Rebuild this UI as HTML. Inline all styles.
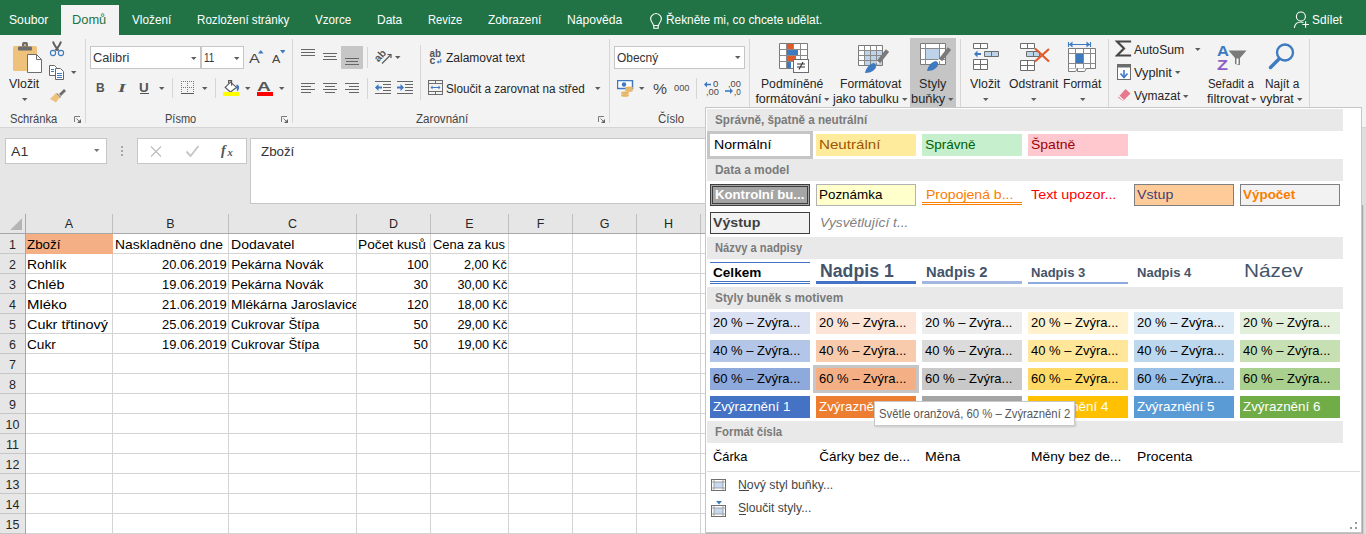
<!DOCTYPE html>
<html><head><meta charset="utf-8"><style>
html,body{margin:0;padding:0;}
body{width:1366px;height:534px;overflow:hidden;position:relative;background:#fff;font-family:"Liberation Sans",sans-serif;}
.r{position:absolute;}
.t{position:absolute;white-space:nowrap;line-height:1;font-family:"Liberation Sans",sans-serif;}
</style></head><body>
<div class="r" style="left:0px;top:0px;width:1366px;height:35px;background:#217346;"></div>
<div class="r" style="left:61px;top:5px;width:58px;height:30px;background:#f3f3f3;"></div>
<div class="t" style="left:9.38px;top:14.00px;font-size:12.5px;color:#ffffff;transform:scaleX(0.9738);transform-origin:0 0;">Soubor</div>
<div class="t" style="left:72.38px;top:14.00px;font-size:12.5px;color:#217346;transform:scaleX(1.0272);transform-origin:0 0;">Domů</div>
<div class="t" style="left:132.38px;top:14.00px;font-size:12.5px;color:#ffffff;transform:scaleX(0.9414);transform-origin:0 0;">Vložení</div>
<div class="t" style="left:197.38px;top:14.00px;font-size:12.5px;color:#ffffff;transform:scaleX(0.9286);transform-origin:0 0;">Rozložení stránky</div>
<div class="t" style="left:315.38px;top:14.00px;font-size:12.5px;color:#ffffff;transform:scaleX(0.9318);transform-origin:0 0;">Vzorce</div>
<div class="t" style="left:377.38px;top:14.00px;font-size:12.5px;color:#ffffff;transform:scaleX(0.9563);transform-origin:0 0;">Data</div>
<div class="t" style="left:428.38px;top:14.00px;font-size:12.5px;color:#ffffff;transform:scaleX(0.8964);transform-origin:0 0;">Revize</div>
<div class="t" style="left:488.38px;top:14.00px;font-size:12.5px;color:#ffffff;transform:scaleX(0.9462);transform-origin:0 0;">Zobrazení</div>
<div class="t" style="left:567.38px;top:14.00px;font-size:12.5px;color:#ffffff;transform:scaleX(0.9695);transform-origin:0 0;">Nápověda</div>
<div class="t" style="left:666.38px;top:14.00px;font-size:12.5px;color:#ffffff;transform:scaleX(0.9489);transform-origin:0 0;">Řekněte mi, co chcete udělat.</div>
<div class="t" style="left:1312.38px;top:14.00px;font-size:12.5px;color:#ffffff;transform:scaleX(0.9464);transform-origin:0 0;">Sdílet</div>
<svg class="r" style="left:648px;top:9px" width="16" height="20" viewBox="0 0 16 20"><path d="M5.5 16.5c-.3-1.5-1-2.5-2-4a5.2 5.2 0 1 1 9 0c-1 1.5-1.7 2.5-2 4z" fill="none" stroke="#fff" stroke-width="1.1"/><path d="M5.8 16.5h4.4v2.8H5.8z" fill="none" stroke="#fff" stroke-width="1.1"/><path d="M6.5 21.5h3" stroke="#fff" stroke-width="1.1"/></svg>
<svg class="r" style="left:1292px;top:11px" width="18" height="18" viewBox="0 0 18 18"><circle cx="8.9" cy="5.5" r="4.5" fill="none" stroke="#fff" stroke-width="1.1"/><path d="M2.3 16.8c.6-3.5 3-5.8 6.4-5.8 1 0 1.9.2 2.7.6" fill="none" stroke="#fff" stroke-width="1.1"/><path d="M13.6 10.2v6.6M10.3 13.5h6.6" stroke="#fff" stroke-width="1.1"/></svg>
<div class="r" style="left:0px;top:35px;width:1366px;height:92px;background:#f3f3f3;"></div>
<div class="r" style="left:0px;top:127px;width:1366px;height:1px;background:#d5d5d5;"></div>
<div class="r" style="left:85px;top:39px;width:1px;height:84px;background:#d6d6d6;"></div>
<div class="r" style="left:292px;top:39px;width:1px;height:84px;background:#d6d6d6;"></div>
<div class="r" style="left:609px;top:39px;width:1px;height:84px;background:#d6d6d6;"></div>
<div class="r" style="left:749px;top:39px;width:1px;height:84px;background:#d6d6d6;"></div>
<div class="r" style="left:960px;top:39px;width:1px;height:84px;background:#d6d6d6;"></div>
<div class="r" style="left:1108px;top:39px;width:1px;height:84px;background:#d6d6d6;"></div>
<div class="r" style="left:1309px;top:39px;width:1px;height:84px;background:#d6d6d6;"></div>
<div class="t" style="left:10.40px;top:113.00px;font-size:12px;color:#444;transform:scaleX(0.9311);transform-origin:0 0;">Schránka</div>
<div class="t" style="left:165.40px;top:113.00px;font-size:12px;color:#444;transform:scaleX(0.9174);transform-origin:0 0;">Písmo</div>
<div class="t" style="left:416.40px;top:113.00px;font-size:12px;color:#444;transform:scaleX(0.9661);transform-origin:0 0;">Zarovnání</div>
<div class="t" style="left:658.40px;top:113.00px;font-size:12px;color:#444;transform:scaleX(0.9583);transform-origin:0 0;">Číslo</div>
<svg class="r" style="left:74px;top:116px" width="8" height="8" viewBox="0 0 8 8"><path d="M.5 6V.5H6" fill="none" stroke="#7a7a7a"/><path d="M7 3v4H3z" fill="#666"/><path d="M2.5 2.5l2.5 2.5" stroke="#7a7a7a"/></svg>
<svg class="r" style="left:281px;top:116px" width="8" height="8" viewBox="0 0 8 8"><path d="M.5 6V.5H6" fill="none" stroke="#7a7a7a"/><path d="M7 3v4H3z" fill="#666"/><path d="M2.5 2.5l2.5 2.5" stroke="#7a7a7a"/></svg>
<svg class="r" style="left:598px;top:116px" width="8" height="8" viewBox="0 0 8 8"><path d="M.5 6V.5H6" fill="none" stroke="#7a7a7a"/><path d="M7 3v4H3z" fill="#666"/><path d="M2.5 2.5l2.5 2.5" stroke="#7a7a7a"/></svg>
<svg class="r" style="left:12px;top:42px" width="32" height="32" viewBox="0 0 32 32"><rect x="1" y="4" width="24" height="25" rx="1.5" fill="#eec27b"/><rect x="6" y="4.5" width="14" height="4" rx="1" fill="#6d6d6d"/><path d="M10 4.5v-2a3 3 0 0 1 6 0v2z" fill="#6d6d6d"/><circle cx="13" cy="3" r="1" fill="#eec27b"/><path d="M15.5 12.5h9l5 5v13h-14z" fill="#fff" stroke="#6d6d6d"/><path d="M24.5 12.5v5h5" fill="none" stroke="#6d6d6d"/></svg>
<div class="t" style="left:9.38px;top:78.00px;font-size:12.5px;color:#262626;transform:scaleX(0.9896);transform-origin:0 0;">Vložit</div>
<svg class="r" style="left:22.0px;top:98.0px" width="6" height="4" viewBox="0 0 6 4"><path d="M0 0h5.5L2.75 3z" fill="#5c5c5c"/></svg>
<svg class="r" style="left:48px;top:40px" width="18" height="17" viewBox="0 0 18 17"><path d="M5 1.5c1 3.5 3 6 5.5 9M13 1.5c-1 3.5-3 6-5.5 9" fill="none" stroke="#5f5f5f" stroke-width="2"/><circle cx="5" cy="13" r="2.6" fill="#f3f3f3" stroke="#3d7ac0" stroke-width="1.1"/><circle cx="13" cy="13" r="2.6" fill="#f3f3f3" stroke="#3d7ac0" stroke-width="1.1"/></svg>
<svg class="r" style="left:48px;top:64px" width="17" height="16" viewBox="0 0 17 16"><path d="M1.5 1.5h5l2 2v8h-7z" fill="#fff" stroke="#666"/><path d="M7.5 4.5h5l3 3v8h-8z" fill="#fff" stroke="#666"/><path d="M3 5.5h3M3 7.5h3M9 9.5h5M9 11.5h5M9 13.5h5" stroke="#3d7ac0"/></svg>
<svg class="r" style="left:70.5px;top:71.0px" width="6" height="4" viewBox="0 0 6 4"><path d="M0 0h5.5L2.75 3z" fill="#5c5c5c"/></svg>
<svg class="r" style="left:49px;top:86px" width="18" height="17" viewBox="0 0 18 17"><path d="M10 8l5-5 2 2-5 5z" fill="#6d6d6d"/><path d="M8 7l4 4-1 1-4-4z" fill="#6d6d6d"/><path d="M1 13l6-6 4 4-4 5.5z" fill="#eec27b"/></svg>
<div class="r" style="left:90px;top:46px;width:111px;height:23px;background:#fff;border:1px solid #c6c6c6;box-sizing:border-box;"></div>
<div class="r" style="left:201px;top:46px;width:43px;height:23px;background:#fff;border:1px solid #c6c6c6;box-sizing:border-box;"></div>
<div class="t" style="left:93.38px;top:52.00px;font-size:12.5px;color:#333;transform:scaleX(1.0233);transform-origin:0 0;">Calibri</div>
<div class="t" style="left:204.38px;top:52.00px;font-size:12.5px;color:#333;transform:scaleX(0.7899);transform-origin:0 0;">11</div>
<svg class="r" style="left:191.0px;top:56.5px" width="6" height="4" viewBox="0 0 6 4"><path d="M0 0h5.5L2.75 3z" fill="#5c5c5c"/></svg>
<svg class="r" style="left:234.0px;top:56.5px" width="6" height="4" viewBox="0 0 6 4"><path d="M0 0h5.5L2.75 3z" fill="#5c5c5c"/></svg>
<div class="t" style="left:249.35px;top:52.00px;font-size:13px;color:#444;transform:scaleX(1.2455);transform-origin:0 0;">A</div>
<svg class="r" style="left:258px;top:49.5px" width="5.5" height="4" viewBox="0 0 5.5 4"><path d="M0 3.5h5.5L2.75 0z" fill="#3d7ac0"/></svg>
<div class="t" style="left:272.48px;top:54.00px;font-size:10.5px;color:#444;transform:scaleX(1.1923);transform-origin:0 0;">A</div>
<svg class="r" style="left:279.8px;top:49.5px" width="5.5" height="4" viewBox="0 0 5.5 4"><path d="M0 0h5.5L2.75 3.5z" fill="#3d7ac0"/></svg>
<div class="t" style="left:95.90px;top:82.00px;font-size:12px;color:#555;font-weight:bold;">B</div>
<div class="t" style="left:118.35px;top:81.00px;font-size:13px;color:#555;font-weight:bold;font-style:italic;font-family:'Liberation Serif',serif;transform:scaleX(1.5418);transform-origin:0 0;">I</div>
<div class="t" style="left:139.40px;top:82.00px;font-size:12px;color:#555;font-weight:bold;transform:scaleX(1.1193);transform-origin:0 0;">U</div>
<div class="r" style="left:140px;top:93px;width:9px;height:1px;background:#555;"></div>
<svg class="r" style="left:159.0px;top:87.0px" width="6" height="4" viewBox="0 0 6 4"><path d="M0 0h5.5L2.75 3z" fill="#5c5c5c"/></svg>
<div class="r" style="left:172px;top:78px;width:1px;height:20px;background:#d6d6d6;"></div>
<svg class="r" style="left:181px;top:80px" width="14" height="15" viewBox="0 0 14 15"><rect x="0" y="1" width="1" height="1" fill="#7a7a7a"/><rect x="2" y="1" width="1" height="1" fill="#7a7a7a"/><rect x="4" y="1" width="1" height="1" fill="#7a7a7a"/><rect x="6" y="1" width="1" height="1" fill="#7a7a7a"/><rect x="8" y="1" width="1" height="1" fill="#7a7a7a"/><rect x="10" y="1" width="1" height="1" fill="#7a7a7a"/><rect x="12" y="1" width="1" height="1" fill="#7a7a7a"/><rect x="0" y="3" width="1" height="1" fill="#7a7a7a"/><rect x="6" y="3" width="1" height="1" fill="#7a7a7a"/><rect x="12" y="3" width="1" height="1" fill="#7a7a7a"/><rect x="0" y="5" width="1" height="1" fill="#7a7a7a"/><rect x="6" y="5" width="1" height="1" fill="#7a7a7a"/><rect x="12" y="5" width="1" height="1" fill="#7a7a7a"/><rect x="0" y="7" width="1" height="1" fill="#7a7a7a"/><rect x="2" y="7" width="1" height="1" fill="#7a7a7a"/><rect x="4" y="7" width="1" height="1" fill="#7a7a7a"/><rect x="6" y="7" width="1" height="1" fill="#7a7a7a"/><rect x="8" y="7" width="1" height="1" fill="#7a7a7a"/><rect x="10" y="7" width="1" height="1" fill="#7a7a7a"/><rect x="12" y="7" width="1" height="1" fill="#7a7a7a"/><rect x="0" y="9" width="1" height="1" fill="#7a7a7a"/><rect x="6" y="9" width="1" height="1" fill="#7a7a7a"/><rect x="12" y="9" width="1" height="1" fill="#7a7a7a"/><rect x="0" y="11" width="1" height="1" fill="#7a7a7a"/><rect x="6" y="11" width="1" height="1" fill="#7a7a7a"/><rect x="12" y="11" width="1" height="1" fill="#7a7a7a"/><rect x="0" y="13" width="13" height="1" fill="#5a5a5a"/></svg>
<svg class="r" style="left:202.0px;top:87.0px" width="6" height="4" viewBox="0 0 6 4"><path d="M0 0h5.5L2.75 3z" fill="#5c5c5c"/></svg>
<div class="r" style="left:215px;top:78px;width:1px;height:20px;background:#d6d6d6;"></div>
<svg class="r" style="left:222px;top:79px" width="18" height="17" viewBox="0 0 18 17"><path d="M3.2 8.4L8.5 3.2l6 5.2-6.1 4.6z" fill="#fff" stroke="#555" stroke-width="1.1"/><path d="M6.6 4.6V1.6h3v5.2" fill="none" stroke="#555" stroke-width="1.1"/><path d="M14.3 5.6c1.8.2 3 1.4 2.8 3.4-.2 1.6-1 2.8-2.1 3.4z" fill="#3d7ac0"/><rect x="1" y="13" width="16" height="4" fill="#ffff00"/></svg>
<svg class="r" style="left:245.0px;top:87.0px" width="6" height="4" viewBox="0 0 6 4"><path d="M0 0h5.5L2.75 3z" fill="#5c5c5c"/></svg>
<div class="t" style="left:257.35px;top:80.00px;font-size:13px;color:#555;font-weight:bold;transform:scaleX(1.4699);transform-origin:0 0;">A</div>
<div class="r" style="left:257px;top:92px;width:16px;height:4px;background:#ff0000;"></div>
<svg class="r" style="left:279.0px;top:87.0px" width="6" height="4" viewBox="0 0 6 4"><path d="M0 0h5.5L2.75 3z" fill="#5c5c5c"/></svg>
<div class="r" style="left:341px;top:46px;width:22px;height:23px;background:#c6c6c6;"></div>
<div class="r" style="left:301px;top:49px;width:14px;height:1px;background:#666666;"></div>
<div class="r" style="left:323px;top:53px;width:14px;height:1px;background:#666666;"></div>
<div class="r" style="left:345px;top:58px;width:14px;height:1px;background:#666666;"></div>
<div class="r" style="left:301px;top:52px;width:14px;height:1px;background:#666666;"></div>
<div class="r" style="left:324px;top:56px;width:12px;height:1px;background:#666666;"></div>
<div class="r" style="left:346px;top:61px;width:12px;height:1px;background:#666666;"></div>
<div class="r" style="left:301px;top:55px;width:14px;height:1px;background:#666666;"></div>
<div class="r" style="left:323px;top:59px;width:14px;height:1px;background:#666666;"></div>
<div class="r" style="left:345px;top:64px;width:14px;height:1px;background:#666666;"></div>
<div class="r" style="left:301px;top:83px;width:14px;height:1px;background:#666666;"></div>
<div class="r" style="left:323px;top:83px;width:14px;height:1px;background:#666666;"></div>
<div class="r" style="left:345px;top:83px;width:14px;height:1px;background:#666666;"></div>
<div class="r" style="left:301px;top:86px;width:10px;height:1px;background:#666666;"></div>
<div class="r" style="left:325px;top:86px;width:10px;height:1px;background:#666666;"></div>
<div class="r" style="left:349px;top:86px;width:10px;height:1px;background:#666666;"></div>
<div class="r" style="left:301px;top:89px;width:14px;height:1px;background:#666666;"></div>
<div class="r" style="left:323px;top:89px;width:14px;height:1px;background:#666666;"></div>
<div class="r" style="left:345px;top:89px;width:14px;height:1px;background:#666666;"></div>
<div class="r" style="left:301px;top:92px;width:10px;height:1px;background:#666666;"></div>
<div class="r" style="left:325px;top:92px;width:10px;height:1px;background:#666666;"></div>
<div class="r" style="left:349px;top:92px;width:10px;height:1px;background:#666666;"></div>
<div class="r" style="left:367px;top:47px;width:1px;height:21px;background:#d6d6d6;"></div>
<div class="r" style="left:367px;top:78px;width:1px;height:21px;background:#d6d6d6;"></div>
<svg class="r" style="left:372px;top:46px" width="24" height="20" viewBox="0 0 24 20"><text x="0" y="0" font-size="10.5" font-weight="bold" font-family="Liberation Sans" fill="#555" transform="translate(6.5 16.5) rotate(-48)">ab</text><path d="M10 17.5l8.5-8.5" stroke="#555" stroke-width="1.1"/><path d="M15.5 8.5h3.5v3.5" fill="none" stroke="#555" stroke-width="1.2"/></svg>
<svg class="r" style="left:395.0px;top:56.0px" width="6" height="4" viewBox="0 0 6 4"><path d="M0 0h5.5L2.75 3z" fill="#5c5c5c"/></svg>
<svg class="r" style="left:375px;top:81px" width="17" height="14" viewBox="0 0 17 14"><path d="M0 .5h16M8 3.5h8M8 6.5h8M8 9.5h8M0 12.5h16" stroke="#666"/><path d="M1 6.5h6" stroke="#3d7ac0" stroke-width="2"/><path d="M0 6.5l3.5-3.5v7z" fill="#3d7ac0"/></svg>
<svg class="r" style="left:397px;top:81px" width="17" height="14" viewBox="0 0 17 14"><path d="M0 .5h16M8 3.5h8M8 6.5h8M8 9.5h8M0 12.5h16" stroke="#666"/><path d="M0 6.5h5" stroke="#3d7ac0" stroke-width="2"/><path d="M7 6.5l-3.5-3.5v7z" fill="#3d7ac0"/></svg>
<div class="r" style="left:420px;top:45px;width:1px;height:55px;background:#d6d6d6;"></div>
<svg class="r" style="left:428px;top:48px" width="16" height="17" viewBox="0 0 16 17"><text x="1.5" y="8.8" font-size="10" font-weight="bold" font-family="Liberation Sans" fill="#555" textLength="11.5" lengthAdjust="spacingAndGlyphs">ab</text><text x="1.5" y="15.8" font-size="10.5" font-weight="bold" font-family="Liberation Sans" fill="#555">c</text><path d="M9.5 14h3.3V11" fill="none" stroke="#3d7ac0" stroke-width="1.1"/><path d="M8.8 14l2-1.8v3.6z" fill="#3d7ac0"/></svg>
<div class="t" style="left:446.38px;top:52.00px;font-size:12.5px;color:#262626;transform:scaleX(0.9606);transform-origin:0 0;">Zalamovat text</div>
<svg class="r" style="left:428px;top:80px" width="16" height="16" viewBox="0 0 16 16"><rect x=".5" y=".5" width="14" height="14" fill="none" stroke="#6d6d6d"/><path d="M.5 3.5h14M.5 11.5h14M7.5 .5v3M7.5 11.5v3" stroke="#6d6d6d"/><path d="M3 7.5h9" stroke="#3d7ac0"/><path d="M2.5 7.5l2-2v4zM12.5 7.5l-2-2v4z" fill="#3d7ac0"/></svg>
<div class="t" style="left:446.38px;top:83.00px;font-size:12.5px;color:#262626;transform:scaleX(0.9375);transform-origin:0 0;">Sloučit a zarovnat na střed</div>
<svg class="r" style="left:595.0px;top:87.0px" width="6" height="4" viewBox="0 0 6 4"><path d="M0 0h5.5L2.75 3z" fill="#5c5c5c"/></svg>
<div class="r" style="left:614px;top:46px;width:131px;height:23px;background:#fff;border:1px solid #c6c6c6;box-sizing:border-box;"></div>
<div class="t" style="left:617.38px;top:52.00px;font-size:12.5px;color:#333;transform:scaleX(0.9576);transform-origin:0 0;">Obecný</div>
<svg class="r" style="left:735.0px;top:56.0px" width="6" height="4" viewBox="0 0 6 4"><path d="M0 0h5.5L2.75 3z" fill="#5c5c5c"/></svg>
<svg class="r" style="left:617px;top:80px" width="17" height="17" viewBox="0 0 17 17"><rect x=".5" y=".5" width="15" height="8" fill="#fff" stroke="#3d7ac0" stroke-width="1.5"/><circle cx="7" cy="4.5" r="2.2" fill="#3d7ac0"/><ellipse cx="12" cy="8" rx="4" ry="1.4" fill="#e8b86a"/><ellipse cx="12" cy="10.5" rx="4" ry="1.4" fill="#e8b86a"/><ellipse cx="8" cy="13" rx="4" ry="1.4" fill="#e8b86a"/><ellipse cx="8" cy="15.5" rx="4" ry="1.4" fill="#e8b86a"/></svg>
<svg class="r" style="left:639.0px;top:87.0px" width="6" height="4" viewBox="0 0 6 4"><path d="M0 0h5.5L2.75 3z" fill="#5c5c5c"/></svg>
<div class="t" style="left:652.75px;top:81.00px;font-size:15px;color:#4a4a4a;transform:scaleX(1.0497);transform-origin:0 0;">%</div>
<div class="t" style="left:673.55px;top:84.00px;font-size:9px;color:#4a4a4a;transform:scaleX(1.0256);transform-origin:0 0;">000</div>
<div class="r" style="left:696px;top:78px;width:1px;height:21px;background:#d6d6d6;"></div>
<svg class="r" style="left:703px;top:80px" width="17" height="16" viewBox="0 0 17 16"><path d="M2 4.5h6" stroke="#3d7ac0" stroke-width="1.6"/><path d="M1 4.5l3-3v6z" fill="#3d7ac0"/></svg>
<div class="t" style="left:713.08px;top:80.00px;font-size:8.5px;color:#4a4a4a;transform:scaleX(1.1317);transform-origin:0 0;">0</div>
<div class="t" style="left:705.58px;top:88.00px;font-size:8.5px;color:#4a4a4a;transform:scaleX(1.0875);transform-origin:0 0;">,00</div>
<div class="t" style="left:727.58px;top:80.00px;font-size:8.5px;color:#4a4a4a;transform:scaleX(1.0875);transform-origin:0 0;">,00</div>
<div class="t" style="left:733.58px;top:88.00px;font-size:8.5px;color:#4a4a4a;transform:scaleX(0.9663);transform-origin:0 0;">,0</div>
<svg class="r" style="left:725px;top:87px" width="10" height="8" viewBox="0 0 10 8"><path d="M0 4h6" stroke="#3d7ac0" stroke-width="1.6"/><path d="M8 4l-3-3v6z" fill="#3d7ac0"/></svg>
<div class="r" style="left:910px;top:38px;width:46px;height:69px;background:#c5c5c5;"></div>
<div class="t" style="left:761.38px;top:78.00px;font-size:12.5px;color:#262626;transform:scaleX(0.9737);transform-origin:0 0;">Podmíněné</div>
<div class="t" style="left:755.38px;top:93.00px;font-size:12.5px;color:#262626;">formátování</div>
<svg class="r" style="left:824.0px;top:98.0px" width="6" height="4" viewBox="0 0 6 4"><path d="M0 0h5.5L2.75 3z" fill="#5c5c5c"/></svg>
<div class="t" style="left:840.38px;top:78.00px;font-size:12.5px;color:#262626;transform:scaleX(0.9689);transform-origin:0 0;">Formátovat</div>
<div class="t" style="left:833.38px;top:93.00px;font-size:12.5px;color:#262626;transform:scaleX(0.9856);transform-origin:0 0;">jako tabulku</div>
<svg class="r" style="left:902.0px;top:98.0px" width="6" height="4" viewBox="0 0 6 4"><path d="M0 0h5.5L2.75 3z" fill="#5c5c5c"/></svg>
<div class="t" style="left:919.38px;top:78.00px;font-size:12.5px;color:#262626;transform:scaleX(1.0060);transform-origin:0 0;">Styly</div>
<div class="t" style="left:911.38px;top:93.00px;font-size:12.5px;color:#262626;transform:scaleX(1.0268);transform-origin:0 0;">buňky</div>
<svg class="r" style="left:948.0px;top:98.0px" width="6" height="4" viewBox="0 0 6 4"><path d="M0 0h5.5L2.75 3z" fill="#5c5c5c"/></svg>
<div class="t" style="left:970.38px;top:78.00px;font-size:12.5px;color:#262626;transform:scaleX(0.9896);transform-origin:0 0;">Vložit</div>
<svg class="r" style="left:983.0px;top:98.0px" width="6" height="4" viewBox="0 0 6 4"><path d="M0 0h5.5L2.75 3z" fill="#5c5c5c"/></svg>
<div class="t" style="left:1009.38px;top:78.00px;font-size:12.5px;color:#262626;transform:scaleX(0.9711);transform-origin:0 0;">Odstranit</div>
<svg class="r" style="left:1031.0px;top:98.0px" width="6" height="4" viewBox="0 0 6 4"><path d="M0 0h5.5L2.75 3z" fill="#5c5c5c"/></svg>
<div class="t" style="left:1063.38px;top:78.00px;font-size:12.5px;color:#262626;transform:scaleX(0.9662);transform-origin:0 0;">Formát</div>
<svg class="r" style="left:1080.0px;top:98.0px" width="6" height="4" viewBox="0 0 6 4"><path d="M0 0h5.5L2.75 3z" fill="#5c5c5c"/></svg>
<svg class="r" style="left:778px;top:42px" width="33" height="32" viewBox="0 0 33 32"><path d="M1.5 1.5h28v25h-28z" fill="#fff" stroke="#7a7a7a"/><path d="M1.5 7.5h28M1.5 13.5h28M1.5 19.5h28M8.5 1.5v25M15.5 1.5v25M22.5 1.5v25" stroke="#8a8a8a"/><rect x="9" y="2" width="6" height="5" fill="#e05a2b"/><rect x="9" y="8" width="11" height="5" fill="#3d7ac0"/><rect x="9" y="14" width="9" height="5" fill="#e05a2b"/><rect x="9" y="20" width="4" height="6" fill="#3d7ac0"/><rect x="15.5" y="17.5" width="15" height="13" fill="#fff" stroke="#6d6d6d"/><path d="M19 22h8M19 25h8M25 20l-4 7.5" stroke="#333" stroke-width="1.1"/></svg>
<svg class="r" style="left:857px;top:44px" width="32" height="30" viewBox="0 0 32 30"><path d="M1.5 1.5h24v20h-24z" fill="#fff" stroke="#7a7a7a"/><rect x="7" y="6" width="18" height="15" fill="#bdd3ea"/><path d="M1.5 6.5h24M1.5 11.5h24M1.5 16.5h24M7.5 1.5v20M13.5 1.5v20M19.5 1.5v20" stroke="#8a8a8a"/><path d="M30.5 6.5l-9 11.5" stroke="#7a7a7a" stroke-width="4.2"/><path d="M19.5 17.5l2.5 2" stroke="#fff" stroke-width="1.6"/><path d="M8 29c1-5 4-9 9-10 2 1 3 3 1 6-3 3-6 4-10 4z" fill="#3d7ac0"/></svg>
<svg class="r" style="left:919px;top:42px" width="32" height="30" viewBox="0 0 32 30"><path d="M1.5 1.5h25v21h-25z" fill="#fff" stroke="#7a7a7a"/><path d="M1.5 6.5h25M1.5 17.5h25M6.5 1.5v21M20.5 1.5v21" stroke="#8a8a8a"/><rect x="7" y="7" width="13" height="10" fill="#bdd3ea"/><path d="M30.5 6.5l-9 11.5" stroke="#7a7a7a" stroke-width="4.2"/><path d="M19.5 17.5l2.5 2" stroke="#fff" stroke-width="1.6"/><path d="M8 29c1-5 4-9 9-10 2 1 3 3 1 6-3 3-6 4-10 4z" fill="#3d7ac0"/></svg>
<svg class="r" style="left:972px;top:42px" width="30" height="30" viewBox="0 0 30 30"><path d="M1.5 1.5h14v5h-14zM8.5 1.5v5" fill="#fff" stroke="#6d6d6d"/><path d="M12.5 9.5h14v5h-14zM19.5 9.5v5" fill="#bdd3ea" stroke="#6d6d6d"/><path d="M4 12h5" stroke="#3d7ac0" stroke-width="2"/><path d="M2 12l3.5-3.5v7z" fill="#3d7ac0"/><path d="M1.5 17.5h14v10h-14zM1.5 22.5h14M8.5 17.5v10" fill="#fff" stroke="#6d6d6d"/></svg>
<svg class="r" style="left:1019px;top:42px" width="32" height="30" viewBox="0 0 32 30"><path d="M1.5 1.5h14v5h-14zM8.5 1.5v5" fill="#fff" stroke="#6d6d6d"/><path d="M7.5 9.5h13v5h-13zM14.5 9.5v5" fill="#bdd3ea" stroke="#6d6d6d"/><path d="M1.5 18.5h14v10h-14zM1.5 23.5h14M8.5 18.5v10" fill="#fff" stroke="#6d6d6d"/><path d="M16 6.5l14 13M30 7l-14 12.5" stroke="#e05a2b" stroke-width="2.2"/></svg>
<svg class="r" style="left:1067px;top:40px" width="30" height="34" viewBox="0 0 30 34"><path d="M1.5 2v5M23.5 2v5M2 4.5h21" stroke="#3d7ac0" stroke-width="1.1"/><path d="M2 4.5l3.5-3v6zM23 4.5l-3.5-3v6z" fill="#3d7ac0"/><path d="M1.5 8.5h27v20h-27z" fill="#fff" stroke="#7a7a7a"/><path d="M1.5 13.5h27M1.5 23.5h27M8.5 8.5v20M16.5 8.5v20M23.5 8.5v20" stroke="#8a8a8a"/><rect x="9" y="14" width="7" height="9" fill="#3d7ac0"/><path d="M1.5 28.5v3h7l2-3M10.5 28.5v3h7l2-3" fill="#fff" stroke="#7a7a7a"/></svg>
<svg class="r" style="left:1115px;top:40px" width="17" height="17" viewBox="0 0 17 17"><path d="M15 2.5V1.5H2l7 7-7 7h13v-1" fill="none" stroke="#474747" stroke-width="2.2"/></svg>
<div class="t" style="left:1134.38px;top:44.00px;font-size:12.5px;color:#262626;transform:scaleX(0.9773);transform-origin:0 0;">AutoSum</div>
<svg class="r" style="left:1195.0px;top:48.0px" width="6" height="4" viewBox="0 0 6 4"><path d="M0 0h5.5L2.75 3z" fill="#5c5c5c"/></svg>
<svg class="r" style="left:1117px;top:64px" width="14" height="16" viewBox="0 0 14 16"><rect x=".5" y=".5" width="13" height="15" fill="#fff" stroke="#6d6d6d"/><rect x="0" y="0" width="14" height="3.5" fill="#6d6d6d"/><path d="M7 6v7" stroke="#3d7ac0" stroke-width="1.6"/><path d="M3.5 9.5l3.5 4 3.5-4" fill="none" stroke="#3d7ac0" stroke-width="1.6"/></svg>
<div class="t" style="left:1134.38px;top:67.00px;font-size:12.5px;color:#262626;transform:scaleX(1.0188);transform-origin:0 0;">Vyplnit</div>
<svg class="r" style="left:1175.0px;top:71.0px" width="6" height="4" viewBox="0 0 6 4"><path d="M0 0h5.5L2.75 3z" fill="#5c5c5c"/></svg>
<svg class="r" style="left:1117px;top:88px" width="14" height="13" viewBox="0 0 14 13"><path d="M1 9.5l7.5-8.5 5 4.5-7.5 7.5z" fill="#e8788c"/><path d="M2.2 8.2l4.2 4" stroke="#fff" stroke-width="1.2"/></svg>
<div class="t" style="left:1134.38px;top:90.00px;font-size:12.5px;color:#262626;transform:scaleX(0.9603);transform-origin:0 0;">Vymazat</div>
<svg class="r" style="left:1183.0px;top:95.0px" width="6" height="4" viewBox="0 0 6 4"><path d="M0 0h5.5L2.75 3z" fill="#5c5c5c"/></svg>
<div class="t" style="left:1216.78px;top:44.00px;font-size:14.5px;color:#3d7ac0;font-weight:bold;transform:scaleX(1.1412);transform-origin:0 0;">A</div>
<div class="t" style="left:1217.28px;top:58.00px;font-size:14.5px;color:#8e5ec2;font-weight:bold;transform:scaleX(1.2363);transform-origin:0 0;">Z</div>
<svg class="r" style="left:1228px;top:50px" width="19" height="16" viewBox="0 0 19 16"><path d="M.5 .5h18l-6.5 7.5v7l-5-1v-6z" fill="#7a7a7a"/><path d="M8.5 8.5v5.5h2v-5.5" fill="#fff"/></svg>
<div class="t" style="left:1208.38px;top:78.00px;font-size:12.5px;color:#262626;transform:scaleX(0.9144);transform-origin:0 0;">Seřadit a</div>
<div class="t" style="left:1206.88px;top:93.00px;font-size:12.5px;color:#262626;transform:scaleX(1.0363);transform-origin:0 0;">filtrovat</div>
<svg class="r" style="left:1251.0px;top:98.0px" width="6" height="4" viewBox="0 0 6 4"><path d="M0 0h5.5L2.75 3z" fill="#5c5c5c"/></svg>
<svg class="r" style="left:1267px;top:42px" width="29" height="29" viewBox="0 0 29 29"><circle cx="18" cy="10.5" r="8" fill="none" stroke="#3d7ac0" stroke-width="2.3"/><path d="M12 17L3.5 25.5" stroke="#3d7ac0" stroke-width="3.4" stroke-linecap="round"/></svg>
<div class="t" style="left:1264.88px;top:78.00px;font-size:12.5px;color:#262626;transform:scaleX(0.9481);transform-origin:0 0;">Najít a</div>
<div class="t" style="left:1260.38px;top:93.00px;font-size:12.5px;color:#262626;transform:scaleX(0.9915);transform-origin:0 0;">vybrat</div>
<svg class="r" style="left:1297.0px;top:98.0px" width="6" height="4" viewBox="0 0 6 4"><path d="M0 0h5.5L2.75 3z" fill="#5c5c5c"/></svg>
<div class="r" style="left:0px;top:128px;width:1366px;height:86px;background:#e6e6e6;"></div>
<div class="r" style="left:5px;top:138px;width:102px;height:26px;background:#fff;border:1px solid #c6c6c6;box-sizing:border-box;"></div>
<div class="t" style="left:11.38px;top:146.00px;font-size:12.5px;color:#333;transform:scaleX(1.1282);transform-origin:0 0;">A1</div>
<svg class="r" style="left:94.0px;top:149.0px" width="6" height="4" viewBox="0 0 6 4"><path d="M0 0h5.5L2.75 3z" fill="#777"/></svg>
<div class="r" style="left:121px;top:146px;width:2px;height:2px;background:#a8a8a8;"></div>
<div class="r" style="left:121px;top:150px;width:2px;height:2px;background:#a8a8a8;"></div>
<div class="r" style="left:121px;top:154px;width:2px;height:2px;background:#a8a8a8;"></div>
<div class="r" style="left:137px;top:138px;width:110px;height:26px;background:#fff;border:1px solid #c6c6c6;box-sizing:border-box;"></div>
<svg class="r" style="left:150px;top:146px" width="12" height="11" viewBox="0 0 12 11"><path d="M1 .5l10 10M11 .5L1 10.5" stroke="#bdbdbd" stroke-width="1.2"/></svg>
<svg class="r" style="left:185px;top:145px" width="15" height="12" viewBox="0 0 15 12"><path d="M1.5 6.5l4 4.5 8-10" fill="none" stroke="#c8c8c8" stroke-width="2"/></svg>
<div class="t" style="left:221px;top:144px;font-size:14px;font-family:'Liberation Serif',serif;font-style:italic;font-weight:bold;color:#555;line-height:1">f</div>
<div class="t" style="left:227.5px;top:147.5px;font-size:10.5px;font-family:'Liberation Serif',serif;font-style:italic;font-weight:bold;color:#555;line-height:1">x</div>
<div class="r" style="left:250px;top:138px;width:1100px;height:66px;background:#fff;border:1px solid #c6c6c6;box-sizing:border-box;"></div>
<div class="t" style="left:261.35px;top:145.00px;font-size:13px;color:#333;transform:scaleX(1.0242);transform-origin:0 0;">Zboží</div>
<div class="r" style="left:0px;top:214px;width:1366px;height:320px;background:#fff;"></div>
<div class="r" style="left:0px;top:214px;width:1366px;height:19px;background:#e6e6e6;"></div>
<div class="r" style="left:0px;top:233px;width:25px;height:301px;background:#e6e6e6;"></div>
<svg class="r" style="left:10px;top:218px" width="13" height="13" viewBox="0 0 13 13"><path d="M12 .2v11.8H.2z" fill="#b4b4b4"/></svg>
<div class="r" style="left:25px;top:234px;width:1px;height:300px;background:#d4d4d4;"></div>
<div class="r" style="left:112px;top:234px;width:1px;height:300px;background:#d4d4d4;"></div>
<div class="r" style="left:228px;top:234px;width:1px;height:300px;background:#d4d4d4;"></div>
<div class="r" style="left:356px;top:234px;width:1px;height:300px;background:#d4d4d4;"></div>
<div class="r" style="left:430px;top:234px;width:1px;height:300px;background:#d4d4d4;"></div>
<div class="r" style="left:508px;top:234px;width:1px;height:300px;background:#d4d4d4;"></div>
<div class="r" style="left:572px;top:234px;width:1px;height:300px;background:#d4d4d4;"></div>
<div class="r" style="left:636px;top:234px;width:1px;height:300px;background:#d4d4d4;"></div>
<div class="r" style="left:700px;top:234px;width:1px;height:300px;background:#d4d4d4;"></div>
<div class="r" style="left:112px;top:214px;width:1px;height:19px;background:#bfbfbf;"></div>
<div class="r" style="left:228px;top:214px;width:1px;height:19px;background:#bfbfbf;"></div>
<div class="r" style="left:356px;top:214px;width:1px;height:19px;background:#bfbfbf;"></div>
<div class="r" style="left:430px;top:214px;width:1px;height:19px;background:#bfbfbf;"></div>
<div class="r" style="left:508px;top:214px;width:1px;height:19px;background:#bfbfbf;"></div>
<div class="r" style="left:572px;top:214px;width:1px;height:19px;background:#bfbfbf;"></div>
<div class="r" style="left:636px;top:214px;width:1px;height:19px;background:#bfbfbf;"></div>
<div class="r" style="left:700px;top:214px;width:1px;height:19px;background:#bfbfbf;"></div>
<div class="r" style="left:765px;top:214px;width:1px;height:19px;background:#bfbfbf;"></div>
<div class="t" style="left:64.83px;top:218.00px;font-size:12.5px;color:#262626;">A</div>
<div class="t" style="left:166.33px;top:218.00px;font-size:12.5px;color:#262626;">B</div>
<div class="t" style="left:287.99px;top:218.00px;font-size:12.5px;color:#262626;">C</div>
<div class="t" style="left:388.99px;top:218.00px;font-size:12.5px;color:#262626;">D</div>
<div class="t" style="left:465.33px;top:218.00px;font-size:12.5px;color:#262626;">E</div>
<div class="t" style="left:536.68px;top:218.00px;font-size:12.5px;color:#262626;">F</div>
<div class="t" style="left:599.64px;top:218.00px;font-size:12.5px;color:#262626;">G</div>
<div class="t" style="left:663.99px;top:218.00px;font-size:12.5px;color:#262626;">H</div>
<div class="r" style="left:0px;top:233px;width:1366px;height:1px;background:#a8a8a8;"></div>
<div class="r" style="left:25px;top:214px;width:1px;height:320px;background:#a8a8a8;"></div>
<div class="r" style="left:26px;top:253px;width:1340px;height:1px;background:#d4d4d4;"></div>
<div class="r" style="left:0px;top:253px;width:25px;height:1px;background:#c6c6c6;"></div>
<div class="t" style="left:9.02px;top:239.00px;font-size:12.5px;color:#262626;">1</div>
<div class="r" style="left:26px;top:273px;width:1340px;height:1px;background:#d4d4d4;"></div>
<div class="r" style="left:0px;top:273px;width:25px;height:1px;background:#c6c6c6;"></div>
<div class="t" style="left:9.02px;top:259.00px;font-size:12.5px;color:#262626;">2</div>
<div class="r" style="left:26px;top:293px;width:1340px;height:1px;background:#d4d4d4;"></div>
<div class="r" style="left:0px;top:293px;width:25px;height:1px;background:#c6c6c6;"></div>
<div class="t" style="left:9.02px;top:279.00px;font-size:12.5px;color:#262626;">3</div>
<div class="r" style="left:26px;top:313px;width:1340px;height:1px;background:#d4d4d4;"></div>
<div class="r" style="left:0px;top:313px;width:25px;height:1px;background:#c6c6c6;"></div>
<div class="t" style="left:9.02px;top:299.00px;font-size:12.5px;color:#262626;">4</div>
<div class="r" style="left:26px;top:333px;width:1340px;height:1px;background:#d4d4d4;"></div>
<div class="r" style="left:0px;top:333px;width:25px;height:1px;background:#c6c6c6;"></div>
<div class="t" style="left:9.02px;top:319.00px;font-size:12.5px;color:#262626;">5</div>
<div class="r" style="left:26px;top:353px;width:1340px;height:1px;background:#d4d4d4;"></div>
<div class="r" style="left:0px;top:353px;width:25px;height:1px;background:#c6c6c6;"></div>
<div class="t" style="left:9.02px;top:339.00px;font-size:12.5px;color:#262626;">6</div>
<div class="r" style="left:26px;top:373px;width:1340px;height:1px;background:#d4d4d4;"></div>
<div class="r" style="left:0px;top:373px;width:25px;height:1px;background:#c6c6c6;"></div>
<div class="t" style="left:9.02px;top:359.00px;font-size:12.5px;color:#262626;">7</div>
<div class="r" style="left:26px;top:393px;width:1340px;height:1px;background:#d4d4d4;"></div>
<div class="r" style="left:0px;top:393px;width:25px;height:1px;background:#c6c6c6;"></div>
<div class="t" style="left:9.02px;top:379.00px;font-size:12.5px;color:#262626;">8</div>
<div class="r" style="left:26px;top:413px;width:1340px;height:1px;background:#d4d4d4;"></div>
<div class="r" style="left:0px;top:413px;width:25px;height:1px;background:#c6c6c6;"></div>
<div class="t" style="left:9.02px;top:399.00px;font-size:12.5px;color:#262626;">9</div>
<div class="r" style="left:26px;top:433px;width:1340px;height:1px;background:#d4d4d4;"></div>
<div class="r" style="left:0px;top:433px;width:25px;height:1px;background:#c6c6c6;"></div>
<div class="t" style="left:5.55px;top:419.00px;font-size:12.5px;color:#262626;">10</div>
<div class="r" style="left:26px;top:453px;width:1340px;height:1px;background:#d4d4d4;"></div>
<div class="r" style="left:0px;top:453px;width:25px;height:1px;background:#c6c6c6;"></div>
<div class="t" style="left:6.01px;top:439.00px;font-size:12.5px;color:#262626;">11</div>
<div class="r" style="left:26px;top:473px;width:1340px;height:1px;background:#d4d4d4;"></div>
<div class="r" style="left:0px;top:473px;width:25px;height:1px;background:#c6c6c6;"></div>
<div class="t" style="left:5.55px;top:459.00px;font-size:12.5px;color:#262626;">12</div>
<div class="r" style="left:26px;top:493px;width:1340px;height:1px;background:#d4d4d4;"></div>
<div class="r" style="left:0px;top:493px;width:25px;height:1px;background:#c6c6c6;"></div>
<div class="t" style="left:5.55px;top:479.00px;font-size:12.5px;color:#262626;">13</div>
<div class="r" style="left:26px;top:513px;width:1340px;height:1px;background:#d4d4d4;"></div>
<div class="r" style="left:0px;top:513px;width:25px;height:1px;background:#c6c6c6;"></div>
<div class="t" style="left:5.55px;top:499.00px;font-size:12.5px;color:#262626;">14</div>
<div class="r" style="left:26px;top:533px;width:1340px;height:1px;background:#d4d4d4;"></div>
<div class="r" style="left:0px;top:533px;width:25px;height:1px;background:#c6c6c6;"></div>
<div class="t" style="left:5.55px;top:519.00px;font-size:12.5px;color:#262626;">15</div>
<div class="r" style="left:26px;top:234px;width:87px;height:20px;background:#f4b084;"></div>
<div class="t" style="left:27.32px;top:238.00px;font-size:13.5px;color:#000;transform:scaleX(0.9878);transform-origin:0 0;">Zboží</div>
<div class="t" style="left:115.33px;top:238.00px;font-size:13.5px;color:#000;transform:scaleX(1.0264);transform-origin:0 0;">Naskladněno dne</div>
<div class="t" style="left:231.32px;top:238.00px;font-size:13.5px;color:#000;transform:scaleX(1.0421);transform-origin:0 0;">Dodavatel</div>
<div class="t" style="left:358.32px;top:238.00px;font-size:13.5px;color:#000;transform:scaleX(1.0159);transform-origin:0 0;">Počet kusů</div>
<div class="t" style="left:432.82px;top:238.00px;font-size:13.5px;color:#000;transform:scaleX(0.9575);transform-origin:0 0;">Cena za kus</div>
<div class="t" style="left:27.32px;top:258.00px;font-size:13.5px;color:#000;transform:scaleX(1.0283);transform-origin:0 0;">Rohlík</div>
<div class="t" style="left:158.61px;top:258.00px;font-size:13.5px;color:#000;transform:scaleX(0.955);transform-origin:100% 0;">20.06.2019</div>
<div class="t" style="left:231.32px;top:258.00px;font-size:13.5px;color:#000;">Pekárna Novák</div>
<div class="t" style="left:405.65px;top:258.00px;font-size:13.5px;color:#000;transform:scaleX(0.96);transform-origin:100% 0;">100</div>
<div class="t" style="left:461.39px;top:258.00px;font-size:13.5px;color:#000;transform:scaleX(0.935);transform-origin:100% 0;">2,00 Kč</div>
<div class="t" style="left:27.32px;top:278.00px;font-size:13.5px;color:#000;transform:scaleX(1.0589);transform-origin:0 0;">Chléb</div>
<div class="t" style="left:158.61px;top:278.00px;font-size:13.5px;color:#000;transform:scaleX(0.955);transform-origin:100% 0;">19.06.2019</div>
<div class="t" style="left:231.32px;top:278.00px;font-size:13.5px;color:#000;">Pekárna Novák</div>
<div class="t" style="left:413.16px;top:278.00px;font-size:13.5px;color:#000;transform:scaleX(0.96);transform-origin:100% 0;">30</div>
<div class="t" style="left:453.89px;top:278.00px;font-size:13.5px;color:#000;transform:scaleX(0.935);transform-origin:100% 0;">30,00 Kč</div>
<div class="t" style="left:27.32px;top:298.00px;font-size:13.5px;color:#000;transform:scaleX(1.1066);transform-origin:0 0;">Mléko</div>
<div class="t" style="left:158.61px;top:298.00px;font-size:13.5px;color:#000;transform:scaleX(0.955);transform-origin:100% 0;">21.06.2019</div>
<div class="t" style="left:231.32px;top:298.00px;font-size:13.5px;color:#000;transform:scaleX(1.0122);transform-origin:0 0;">Mlékárna Jaroslavice</div>
<div class="t" style="left:405.65px;top:298.00px;font-size:13.5px;color:#000;transform:scaleX(0.96);transform-origin:100% 0;">120</div>
<div class="t" style="left:453.89px;top:298.00px;font-size:13.5px;color:#000;transform:scaleX(0.935);transform-origin:100% 0;">18,00 Kč</div>
<div class="t" style="left:27.32px;top:318.00px;font-size:13.5px;color:#000;transform:scaleX(1.0671);transform-origin:0 0;">Cukr třtinový</div>
<div class="t" style="left:158.61px;top:318.00px;font-size:13.5px;color:#000;transform:scaleX(0.955);transform-origin:100% 0;">25.06.2019</div>
<div class="t" style="left:231.32px;top:318.00px;font-size:13.5px;color:#000;transform:scaleX(0.9813);transform-origin:0 0;">Cukrovar Štípa</div>
<div class="t" style="left:413.16px;top:318.00px;font-size:13.5px;color:#000;transform:scaleX(0.96);transform-origin:100% 0;">50</div>
<div class="t" style="left:453.89px;top:318.00px;font-size:13.5px;color:#000;transform:scaleX(0.935);transform-origin:100% 0;">29,00 Kč</div>
<div class="t" style="left:27.32px;top:338.00px;font-size:13.5px;color:#000;transform:scaleX(1.0122);transform-origin:0 0;">Cukr</div>
<div class="t" style="left:158.61px;top:338.00px;font-size:13.5px;color:#000;transform:scaleX(0.955);transform-origin:100% 0;">19.06.2019</div>
<div class="t" style="left:231.32px;top:338.00px;font-size:13.5px;color:#000;transform:scaleX(0.9813);transform-origin:0 0;">Cukrovar Štípa</div>
<div class="t" style="left:413.16px;top:338.00px;font-size:13.5px;color:#000;transform:scaleX(0.96);transform-origin:100% 0;">50</div>
<div class="t" style="left:453.89px;top:338.00px;font-size:13.5px;color:#000;transform:scaleX(0.935);transform-origin:100% 0;">19,00 Kč</div>
<div class="r" style="left:357px;top:294px;width:5px;height:19px;background:#fff;"></div>
<div class="r" style="left:356px;top:293px;width:1px;height:20px;background:#d4d4d4;"></div>
<div class="r" style="left:1362px;top:128px;width:4px;height:406px;background:#dedede;"></div>
<div class="r" style="left:705px;top:107px;width:657px;height:426px;background:#fff;border:1px solid #c6c6c6;box-sizing:border-box;"></div>
<div class="r" style="left:1362px;top:205px;width:1px;height:329px;background:#a9a9a9;"></div>
<div class="r" style="left:1363px;top:205px;width:1px;height:329px;background:#cfcfcf;"></div>
<div class="r" style="left:706px;top:533px;width:657px;height:1px;background:#b9b9b9;"></div>
<div class="r" style="left:707px;top:109px;width:636px;height:22px;background:#e9e9e9;"></div>
<div class="t" style="left:715.40px;top:114.00px;font-size:12px;color:#7a7a7a;font-weight:bold;transform:scaleX(0.9712);transform-origin:0 0;">Správně, špatně a neutrální</div>
<div class="r" style="left:707px;top:131px;width:106px;height:28px;background:#c6c6c6;"></div>
<div class="r" style="left:710px;top:134px;width:100px;height:22px;background:#fff;"></div>
<div class="t" style="left:714.33px;top:138.00px;font-size:13.5px;color:#000;transform:scaleX(1.0472);transform-origin:0 0;">Normální</div>
<div class="r" style="left:816px;top:134px;width:100px;height:22px;background:#ffeb9c;"></div>
<div class="t" style="left:819.33px;top:138.00px;font-size:13.5px;color:#9c5700;transform:scaleX(1.1200);transform-origin:0 0;">Neutrální</div>
<div class="r" style="left:922px;top:134px;width:100px;height:22px;background:#c6efce;"></div>
<div class="t" style="left:925.33px;top:138.00px;font-size:13.5px;color:#006100;">Správně</div>
<div class="r" style="left:1028px;top:134px;width:100px;height:22px;background:#ffc7ce;"></div>
<div class="t" style="left:1031.33px;top:138.00px;font-size:13.5px;color:#9c0006;transform:scaleX(1.0365);transform-origin:0 0;">Špatně</div>
<div class="r" style="left:707px;top:159px;width:636px;height:22px;background:#e9e9e9;"></div>
<div class="t" style="left:715.40px;top:164.00px;font-size:12px;color:#7a7a7a;font-weight:bold;transform:scaleX(0.9934);transform-origin:0 0;">Data a model</div>
<div class="r" style="left:710px;top:184px;width:100px;height:22px;background:#a5a5a5;border:3px double #3f3f3f;box-sizing:border-box;"></div>
<div class="t" style="left:715.35px;top:188.00px;font-size:13px;color:#fff;font-weight:bold;transform:scaleX(1.0137);transform-origin:0 0;">Kontrolní bu...</div>
<div class="r" style="left:816px;top:184px;width:100px;height:22px;background:#ffffcc;border:1px solid #b2b2b2;box-sizing:border-box;"></div>
<div class="t" style="left:819.33px;top:188.00px;font-size:13.5px;color:#000;transform:scaleX(0.9932);transform-origin:0 0;">Poznámka</div>
<div class="r" style="left:922px;top:184px;width:100px;height:22px;background:#fff;"></div>
<div class="t" style="left:926.33px;top:188.00px;font-size:13.5px;color:#fa7d00;transform:scaleX(1.0392);transform-origin:0 0;">Propojená b...</div>
<div class="r" style="left:922px;top:202px;width:100px;height:1px;background:#ff8001;"></div>
<div class="r" style="left:922px;top:204px;width:100px;height:1px;background:#ff8001;"></div>
<div class="t" style="left:1031.33px;top:188.00px;font-size:13.5px;color:#ff0000;transform:scaleX(1.0630);transform-origin:0 0;">Text upozor...</div>
<div class="r" style="left:1134px;top:184px;width:100px;height:22px;background:#ffcc99;border:1px solid #7f7f7f;box-sizing:border-box;"></div>
<div class="t" style="left:1137.33px;top:188.00px;font-size:13.5px;color:#3f3f76;transform:scaleX(1.0530);transform-origin:0 0;">Vstup</div>
<div class="r" style="left:1240px;top:184px;width:100px;height:22px;background:#f2f2f2;border:1px solid #7f7f7f;box-sizing:border-box;"></div>
<div class="t" style="left:1243.35px;top:188.00px;font-size:13px;color:#fa7d00;font-weight:bold;transform:scaleX(1.0342);transform-origin:0 0;">Výpočet</div>
<div class="r" style="left:710px;top:212px;width:100px;height:22px;background:#f2f2f2;border:1px solid #3f3f3f;box-sizing:border-box;"></div>
<div class="t" style="left:713.35px;top:216.00px;font-size:13px;color:#3f3f3f;font-weight:bold;transform:scaleX(1.0913);transform-origin:0 0;">Výstup</div>
<div class="t" style="left:820.33px;top:216.00px;font-size:13.5px;color:#7f7f7f;font-style:italic;transform:scaleX(1.0181);transform-origin:0 0;">Vysvětlující t...</div>
<div class="r" style="left:707px;top:237px;width:636px;height:22px;background:#e9e9e9;"></div>
<div class="t" style="left:715.40px;top:242.00px;font-size:12px;color:#7a7a7a;font-weight:bold;transform:scaleX(0.9339);transform-origin:0 0;">Názvy a nadpisy</div>
<div class="r" style="left:710px;top:262px;width:100px;height:1px;background:#4472c4;"></div>
<div class="r" style="left:710px;top:281px;width:100px;height:1px;background:#4472c4;"></div>
<div class="r" style="left:710px;top:283px;width:100px;height:1px;background:#4472c4;"></div>
<div class="t" style="left:713.35px;top:266.00px;font-size:13px;color:#000;font-weight:bold;transform:scaleX(1.0443);transform-origin:0 0;">Celkem</div>
<div class="t" style="left:820.12px;top:263.00px;font-size:17.5px;color:#44546a;font-weight:bold;transform:scaleX(1.0111);transform-origin:0 0;">Nadpis 1</div>
<div class="r" style="left:816px;top:281px;width:100px;height:3px;background:#4472c4;"></div>
<div class="t" style="left:926.25px;top:264.00px;font-size:15px;color:#44546a;font-weight:bold;transform:scaleX(0.9837);transform-origin:0 0;">Nadpis 2</div>
<div class="r" style="left:922px;top:281px;width:100px;height:3px;background:#a2b8e1;"></div>
<div class="t" style="left:1031.38px;top:267.00px;font-size:12.5px;color:#44546a;font-weight:bold;transform:scaleX(1.0413);transform-origin:0 0;">Nadpis 3</div>
<div class="r" style="left:1028px;top:282px;width:100px;height:2px;background:#8ea9db;"></div>
<div class="t" style="left:1137.38px;top:267.00px;font-size:12.5px;color:#44546a;font-weight:bold;transform:scaleX(1.0413);transform-origin:0 0;">Nadpis 4</div>
<div class="t" style="left:1244.05px;top:261.00px;font-size:19px;color:#44546a;transform:scaleX(1.0937);transform-origin:0 0;">Název</div>
<div class="r" style="left:707px;top:287px;width:636px;height:22px;background:#e9e9e9;"></div>
<div class="t" style="left:715.40px;top:292.00px;font-size:12px;color:#7a7a7a;font-weight:bold;transform:scaleX(0.9858);transform-origin:0 0;">Styly buněk s motivem</div>
<div class="r" style="left:813px;top:365px;width:106px;height:28px;background:#c6c6c6;"></div>
<div class="r" style="left:710px;top:312px;width:100px;height:22px;background:#d9e1f2;"></div>
<div class="t" style="left:713.33px;top:316.00px;font-size:13.5px;color:#000;transform:scaleX(0.9622);transform-origin:0 0;">20 % – Zvýra...</div>
<div class="r" style="left:710px;top:340px;width:100px;height:22px;background:#b4c6e7;"></div>
<div class="t" style="left:713.33px;top:344.00px;font-size:13.5px;color:#000;transform:scaleX(0.9622);transform-origin:0 0;">40 % – Zvýra...</div>
<div class="r" style="left:710px;top:368px;width:100px;height:22px;background:#8ea9db;"></div>
<div class="t" style="left:713.33px;top:372.00px;font-size:13.5px;color:#000;transform:scaleX(0.9622);transform-origin:0 0;">60 % – Zvýra...</div>
<div class="r" style="left:710px;top:396px;width:100px;height:22px;background:#4472c4;"></div>
<div class="t" style="left:713.33px;top:400.00px;font-size:13.5px;color:#fff;transform:scaleX(0.9912);transform-origin:0 0;">Zvýraznění 1</div>
<div class="r" style="left:816px;top:312px;width:100px;height:22px;background:#fce4d6;"></div>
<div class="t" style="left:819.33px;top:316.00px;font-size:13.5px;color:#000;transform:scaleX(0.9622);transform-origin:0 0;">20 % – Zvýra...</div>
<div class="r" style="left:816px;top:340px;width:100px;height:22px;background:#f8cbad;"></div>
<div class="t" style="left:819.33px;top:344.00px;font-size:13.5px;color:#000;transform:scaleX(0.9622);transform-origin:0 0;">40 % – Zvýra...</div>
<div class="r" style="left:816px;top:368px;width:100px;height:22px;background:#f4b084;"></div>
<div class="t" style="left:819.33px;top:372.00px;font-size:13.5px;color:#000;transform:scaleX(0.9622);transform-origin:0 0;">60 % – Zvýra...</div>
<div class="r" style="left:816px;top:396px;width:100px;height:22px;background:#ed7d31;"></div>
<div class="t" style="left:819.33px;top:400.00px;font-size:13.5px;color:#fff;transform:scaleX(0.9912);transform-origin:0 0;">Zvýraznění 2</div>
<div class="r" style="left:922px;top:312px;width:100px;height:22px;background:#ededed;"></div>
<div class="t" style="left:925.33px;top:316.00px;font-size:13.5px;color:#000;transform:scaleX(0.9622);transform-origin:0 0;">20 % – Zvýra...</div>
<div class="r" style="left:922px;top:340px;width:100px;height:22px;background:#dbdbdb;"></div>
<div class="t" style="left:925.33px;top:344.00px;font-size:13.5px;color:#000;transform:scaleX(0.9622);transform-origin:0 0;">40 % – Zvýra...</div>
<div class="r" style="left:922px;top:368px;width:100px;height:22px;background:#c9c9c9;"></div>
<div class="t" style="left:925.33px;top:372.00px;font-size:13.5px;color:#000;transform:scaleX(0.9622);transform-origin:0 0;">60 % – Zvýra...</div>
<div class="r" style="left:922px;top:396px;width:100px;height:22px;background:#a5a5a5;"></div>
<div class="t" style="left:925.33px;top:400.00px;font-size:13.5px;color:#fff;transform:scaleX(0.9912);transform-origin:0 0;">Zvýraznění 3</div>
<div class="r" style="left:1028px;top:312px;width:100px;height:22px;background:#fff2cc;"></div>
<div class="t" style="left:1031.33px;top:316.00px;font-size:13.5px;color:#000;transform:scaleX(0.9622);transform-origin:0 0;">20 % – Zvýra...</div>
<div class="r" style="left:1028px;top:340px;width:100px;height:22px;background:#ffe699;"></div>
<div class="t" style="left:1031.33px;top:344.00px;font-size:13.5px;color:#000;transform:scaleX(0.9622);transform-origin:0 0;">40 % – Zvýra...</div>
<div class="r" style="left:1028px;top:368px;width:100px;height:22px;background:#ffd966;"></div>
<div class="t" style="left:1031.33px;top:372.00px;font-size:13.5px;color:#000;transform:scaleX(0.9622);transform-origin:0 0;">60 % – Zvýra...</div>
<div class="r" style="left:1028px;top:396px;width:100px;height:22px;background:#ffc000;"></div>
<div class="t" style="left:1031.33px;top:400.00px;font-size:13.5px;color:#fff;transform:scaleX(0.9912);transform-origin:0 0;">Zvýraznění 4</div>
<div class="r" style="left:1134px;top:312px;width:100px;height:22px;background:#ddebf7;"></div>
<div class="t" style="left:1137.33px;top:316.00px;font-size:13.5px;color:#000;transform:scaleX(0.9622);transform-origin:0 0;">20 % – Zvýra...</div>
<div class="r" style="left:1134px;top:340px;width:100px;height:22px;background:#bdd7ee;"></div>
<div class="t" style="left:1137.33px;top:344.00px;font-size:13.5px;color:#000;transform:scaleX(0.9622);transform-origin:0 0;">40 % – Zvýra...</div>
<div class="r" style="left:1134px;top:368px;width:100px;height:22px;background:#9bc2e6;"></div>
<div class="t" style="left:1137.33px;top:372.00px;font-size:13.5px;color:#000;transform:scaleX(0.9622);transform-origin:0 0;">60 % – Zvýra...</div>
<div class="r" style="left:1134px;top:396px;width:100px;height:22px;background:#5b9bd5;"></div>
<div class="t" style="left:1137.33px;top:400.00px;font-size:13.5px;color:#fff;transform:scaleX(0.9912);transform-origin:0 0;">Zvýraznění 5</div>
<div class="r" style="left:1240px;top:312px;width:100px;height:22px;background:#e2efda;"></div>
<div class="t" style="left:1243.33px;top:316.00px;font-size:13.5px;color:#000;transform:scaleX(0.9622);transform-origin:0 0;">20 % – Zvýra...</div>
<div class="r" style="left:1240px;top:340px;width:100px;height:22px;background:#c6e0b4;"></div>
<div class="t" style="left:1243.33px;top:344.00px;font-size:13.5px;color:#000;transform:scaleX(0.9622);transform-origin:0 0;">40 % – Zvýra...</div>
<div class="r" style="left:1240px;top:368px;width:100px;height:22px;background:#a9d08e;"></div>
<div class="t" style="left:1243.33px;top:372.00px;font-size:13.5px;color:#000;transform:scaleX(0.9622);transform-origin:0 0;">60 % – Zvýra...</div>
<div class="r" style="left:1240px;top:396px;width:100px;height:22px;background:#70ad47;"></div>
<div class="t" style="left:1243.33px;top:400.00px;font-size:13.5px;color:#fff;transform:scaleX(0.9912);transform-origin:0 0;">Zvýraznění 6</div>
<div class="r" style="left:707px;top:421px;width:636px;height:22px;background:#e9e9e9;"></div>
<div class="t" style="left:715.40px;top:426.00px;font-size:12px;color:#7a7a7a;font-weight:bold;transform:scaleX(0.9506);transform-origin:0 0;">Formát čísla</div>
<div class="t" style="left:713.33px;top:450.00px;font-size:13.5px;color:#000;transform:scaleX(0.9539);transform-origin:0 0;">Čárka</div>
<div class="t" style="left:819.33px;top:450.00px;font-size:13.5px;color:#000;">Čárky bez de...</div>
<div class="t" style="left:925.33px;top:450.00px;font-size:13.5px;color:#000;transform:scaleX(1.0468);transform-origin:0 0;">Měna</div>
<div class="t" style="left:1031.33px;top:450.00px;font-size:13.5px;color:#000;transform:scaleX(1.0204);transform-origin:0 0;">Měny bez de...</div>
<div class="t" style="left:1137.33px;top:450.00px;font-size:13.5px;color:#000;transform:scaleX(1.0244);transform-origin:0 0;">Procenta</div>
<div class="r" style="left:707px;top:471px;width:653px;height:1px;background:#dcdcdc;"></div>
<svg class="r" style="left:711px;top:479px" width="15" height="12" viewBox="0 0 15 12"><rect x=".5" y=".5" width="14" height="11" fill="#fff" stroke="#6d6d6d"/><rect x="3" y="3" width="9" height="6" fill="#c5d9f1"/><path d="M.5 3h14M.5 9h14M3 .5v11M12 .5v11" stroke="#999" stroke-width=".9"/></svg>
<div class="t" style="left:738.38px;top:479.00px;font-size:12.5px;color:#444;transform:scaleX(0.9817);transform-origin:0 0;">Nový styl buňky...</div>
<div class="r" style="left:739px;top:490px;width:10px;height:1px;background:#444;"></div>
<svg class="r" style="left:711px;top:500px" width="15" height="17" viewBox="0 0 15 17"><path d="M5 1h6l-3 3.5z" fill="#3d7ac0"/><rect x=".5" y="5.5" width="14" height="11" fill="#fff" stroke="#6d6d6d"/><rect x="3" y="8" width="9" height="6" fill="#c5d9f1"/><path d="M.5 8h14M.5 14h14M3 5.5v11M12 5.5v11" stroke="#999" stroke-width=".9"/></svg>
<div class="t" style="left:738.38px;top:502.00px;font-size:12.5px;color:#444;transform:scaleX(0.9704);transform-origin:0 0;">Sloučit styly...</div>
<div class="r" style="left:739px;top:514px;width:7px;height:1px;background:#444;"></div>
<svg class="r" style="left:1350px;top:522px" width="8" height="8" viewBox="0 0 8 8"><rect x="5" y="0" width="2" height="2" fill="#999"/><rect x="5" y="5" width="2" height="2" fill="#999"/><rect x="0" y="5" width="2" height="2" fill="#999"/></svg>
<div class="r" style="left:874px;top:401px;width:201px;height:25px;background:#fff;border:1px solid #c8c8c8;box-sizing:border-box;box-shadow:1px 1px 2px rgba(0,0,0,.15);"></div>
<div class="t" style="left:878.88px;top:408.00px;font-size:12.5px;color:#575757;transform:scaleX(0.9054);transform-origin:0 0;">Světle oranžová, 60 % – Zvýraznění 2</div>
</body></html>
